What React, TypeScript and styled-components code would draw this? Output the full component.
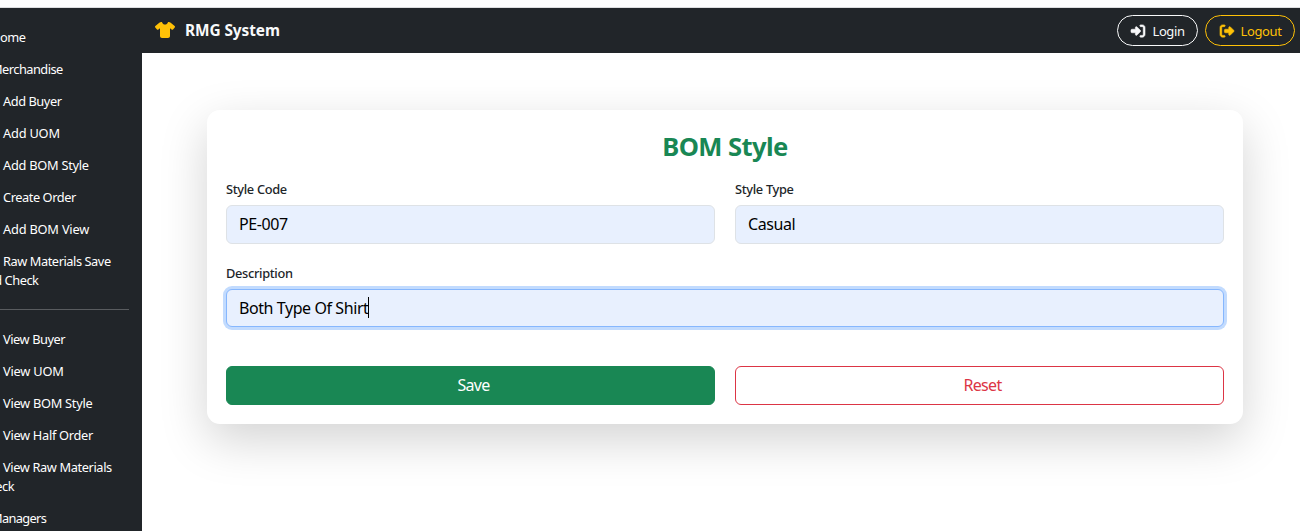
import React from "react";
import styled, { createGlobalStyle } from "styled-components";
import { FaShirt, FaRightToBracket, FaRightFromBracket } from "react-icons/fa6";

const GlobalStyle = createGlobalStyle`
  * { box-sizing: border-box; }
  body {
    margin: 0;
    background: #fff;
    color: #212529;
    font-family: "Noto Sans", "Open Sans", sans-serif;
  }
`;

const Page = styled.div`
  display: flex;
  flex-direction: column;
  height: 531px;
  overflow: hidden;
`;

const TopStrip = styled.div`
  flex: none;
  height: 8px;
  background: #fdfdfe;
  border-bottom: 1px solid #dcdde0;
`;

const Shell = styled.div`
  display: flex;
  flex: 1;
  min-height: 0;
`;

const Sidebar = styled.nav`
  flex: none;
  width: 142px;
  padding: 13.8px 12.8px 0 0;
  background: #212529;
  color: #fff;
  overflow: hidden;
`;

const NavItem = styled.a<{ $indent: number; $tracking: number }>`
  display: block;
  margin-left: -20px;
  padding: 6.4px 0;
  font-size: 12.8px;
  line-height: 19.2px;
  letter-spacing: ${(p) => p.$tracking}px;
  text-indent: ${(p) => p.$indent}px;
  color: #fff;
`;

const Divider = styled.hr`
  height: 1px;
  margin: 11.8px 0 13.8px;
  border: 0;
  background: #595c5f;
`;

const Main = styled.div`
  display: flex;
  flex-direction: column;
  flex: 1;
  min-width: 0;
`;

const Navbar = styled.header`
  display: flex;
  flex: none;
  align-items: center;
  justify-content: space-between;
  height: 45px;
  padding: 0 5px 0 13px;
  background: #212529;
`;

const Brand = styled.div`
  display: flex;
  align-items: center;
  gap: 10px;
  padding-bottom: 1px;
  color: #f8f9fa;
  font-size: 15.4px;
  font-weight: 700;
  letter-spacing: -0.08px;

  svg {
    width: 20px;
    height: 16px;
    color: #ffc107;
  }
`;

const Actions = styled.div`
  display: flex;
  gap: 7px;
`;

const PillButton = styled.button<{ $color: string; $width: number }>`
  display: flex;
  align-items: center;
  justify-content: center;
  gap: 7px;
  width: ${(p) => p.$width}px;
  height: 31px;
  padding: 0 0 0 1px;
  border: 1px solid ${(p) => p.$color};
  border-radius: 16px;
  background: transparent;
  color: ${(p) => p.$color};
  font: 400 13px "Noto Sans", sans-serif;
  letter-spacing: -0.4px;

  svg {
    width: 14px;
    height: 14px;
    overflow: visible;
    stroke: currentColor;
    stroke-width: 22px;
  }
`;

const Card = styled.form`
  display: flex;
  flex-direction: column;
  width: 1036px;
  height: 314px;
  margin: 57px 0 0 65px;
  padding: 19px;
  border-radius: 12.8px;
  background: #fff;
  box-shadow: 0 16px 48px rgba(0, 0, 0, 0.175);
`;

const Title = styled.h2`
  margin: 0 0 9px;
  color: #198754;
  font-size: 25.6px;
  font-weight: 700;
  line-height: 36px;
  letter-spacing: -0.6px;
  text-align: center;
`;

const Row = styled.div`
  display: grid;
  grid-template-columns: repeat(2, 1fr);
  gap: 20px;
`;

const Field = styled.label`
  display: flex;
  flex-direction: column;
  flex: none;
  height: 84px;
`;

const LabelText = styled.span`
  height: 31px;
  padding-top: 5px;
  font-size: 12.8px;
  font-weight: 500;
  line-height: 20px;
  letter-spacing: -0.32px;
`;

const Control = styled.div<{ $focused?: boolean }>`
  display: flex;
  align-items: center;
  height: ${(p) => (p.$focused ? 38 : 39)}px;
  padding: 0 12px 1px;
  border: 1px solid ${(p) => (p.$focused ? "#86b7fe" : "#dee2e6")};
  border-radius: 6px;
  background: #e8f0fe;
  box-shadow: ${(p) => (p.$focused ? "0 0 0 3px #c2dbfe" : "none")};
  color: #000;
  font-size: 16px;
  letter-spacing: -0.42px;
`;

const Caret = styled.span`
  width: 1px;
  height: 21px;
  background: #000;
`;

const ButtonRow = styled(Row)`
  margin-top: 24px;
`;

const FormButton = styled.button<{ $outline?: boolean }>`
  height: 39px;
  padding: 0 0 1px 6px;
  border: 1px solid ${(p) => (p.$outline ? "#dc3545" : "#198754")};
  border-radius: 6px;
  background: ${(p) => (p.$outline ? "#fff" : "#198754")};
  color: ${(p) => (p.$outline ? "#dc3545" : "#fff")};
  font: 400 16px "Noto Sans", sans-serif;
  letter-spacing: -0.7px;
`;

interface NavEntry {
  label: string;
  indent: number;
  tracking?: number;
}

const SUB = 23;
const TOP = 11;

const entryItems: NavEntry[] = [
  { label: "Home", indent: TOP },
  { label: "Merchandise", indent: TOP, tracking: -0.52 },
  { label: "Add Buyer", indent: SUB },
  { label: "Add UOM", indent: SUB, tracking: -0.2 },
  { label: "Add BOM Style", indent: SUB, tracking: -0.26 },
  { label: "Create Order", indent: SUB },
  { label: "Add BOM View", indent: SUB, tracking: -0.2 },
  { label: "Raw Materials Save and Check", indent: SUB },
];

const viewItems: NavEntry[] = [
  { label: "View Buyer", indent: SUB },
  { label: "View UOM", indent: SUB, tracking: -0.2 },
  { label: "View BOM Style", indent: SUB, tracking: -0.28 },
  { label: "View Half Order", indent: SUB, tracking: -0.3 },
  { label: "View Raw Materials Check", indent: SUB, tracking: -0.38 },
  { label: "Managers", indent: TOP, tracking: -0.65 },
];

function NavList({ items }: { items: NavEntry[] }) {
  return (
    <>
      {items.map((item) => (
        <NavItem
          key={item.label}
          $indent={item.indent}
          $tracking={item.tracking ?? -0.44}
        >
          {item.label}
        </NavItem>
      ))}
    </>
  );
}

export default function App() {
  return (
    <>
      <GlobalStyle />
      <Page>
        <TopStrip />
        <Shell>
          <Sidebar>
            <NavList items={entryItems} />
            <Divider />
            <NavList items={viewItems} />
          </Sidebar>
          <Main>
            <Navbar>
              <Brand>
                <FaShirt />
                RMG System
              </Brand>
              <Actions>
                <PillButton $color="#f8f9fa" $width={81}>
                  <FaRightToBracket />
                  Login
                </PillButton>
                <PillButton $color="#ffc107" $width={90}>
                  <FaRightFromBracket />
                  Logout
                </PillButton>
              </Actions>
            </Navbar>
            <Card>
              <Title>BOM Style</Title>
              <Row>
                <Field>
                  <LabelText>Style Code</LabelText>
                  <Control>PE-007</Control>
                </Field>
                <Field>
                  <LabelText>Style Type</LabelText>
                  <Control>Casual</Control>
                </Field>
              </Row>
              <Field>
                <LabelText>Description</LabelText>
                <Control $focused>
                  Both Type Of Shirt
                  <Caret />
                </Control>
              </Field>
              <ButtonRow>
                <FormButton type="button">Save</FormButton>
                <FormButton type="button" $outline>
                  Reset
                </FormButton>
              </ButtonRow>
            </Card>
          </Main>
        </Shell>
      </Page>
    </>
  );
}
